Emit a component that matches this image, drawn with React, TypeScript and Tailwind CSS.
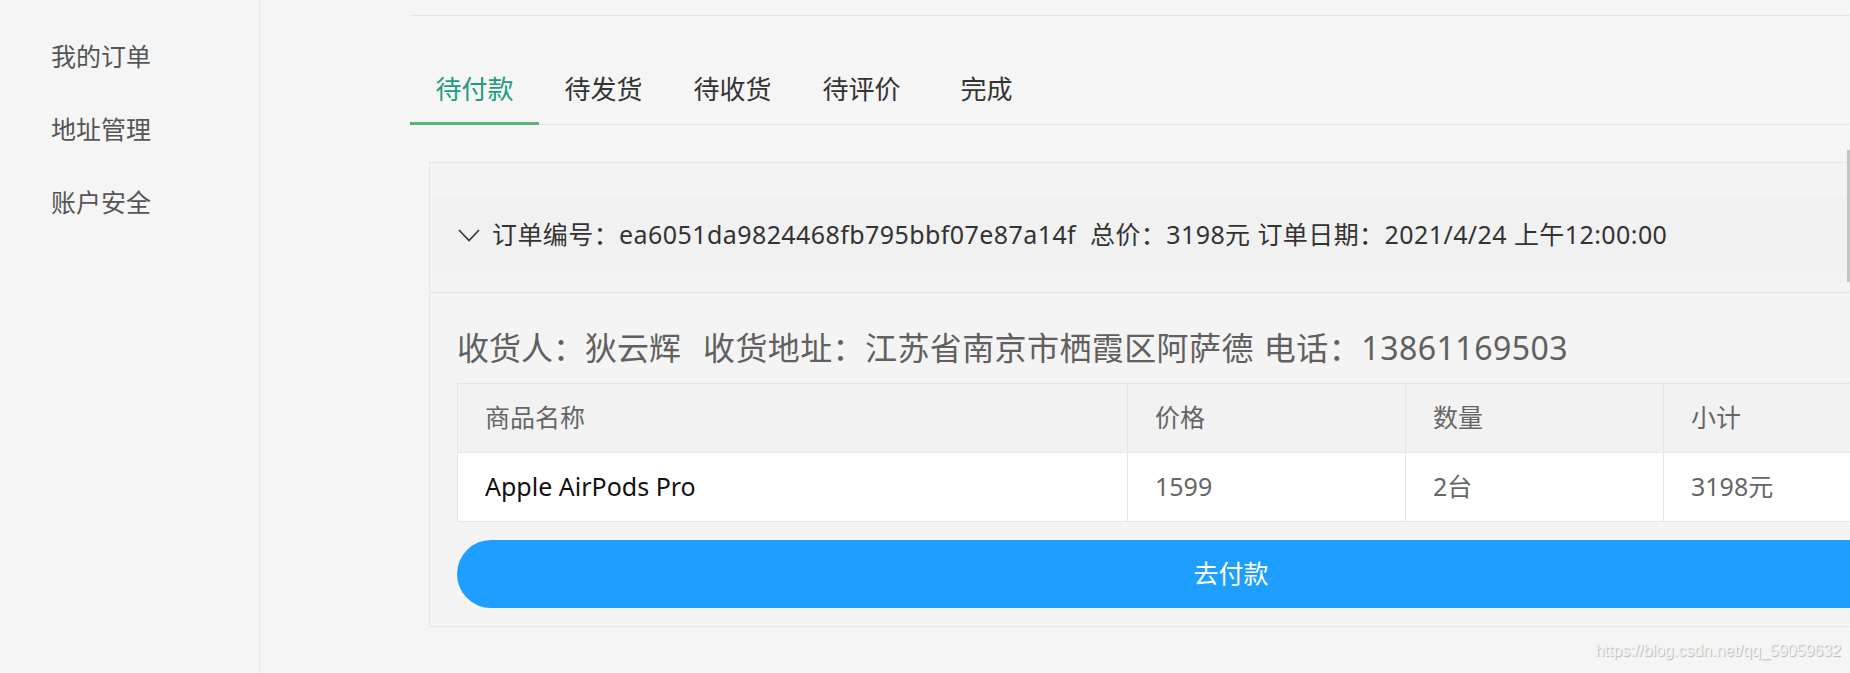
import React from "react";

const tabs = ["待付款", "待发货", "待收货", "待评价", "完成"];

const menu = ["我的订单", "地址管理", "账户安全"];

const App = () => {
  return (
    <div className="relative flex h-[673px] w-[1850px] overflow-hidden bg-[#f5f5f5] font-['Noto_Sans','Noto_Sans_CJK_SC',sans-serif]">
      {/* Sidebar */}
      <div className="w-[260px] shrink-0 border-r border-[#ebebeb] pt-[20px] pl-[51px]">
        {menu.map((item) => (
          <div
            key={item}
            className="h-[73px] flex items-center text-[25px] text-[#555]"
          >
            {item}
          </div>
        ))}
      </div>

      {/* Main */}
      <div className="flex-1 min-w-0 overflow-hidden pl-[150px]">
        <div className="w-[1700px] shrink-0">
          <div className="h-[16px] border-b border-[#e6e6e6]"></div>

          {/* Tabs */}
          <div className="mt-[38px] flex h-[71px] border-b border-[#e2e2e2]">
            {tabs.map((tab, i) => (
              <div
                key={tab}
                className={
                  i === 0
                    ? "-mb-px flex h-[71px] w-[129px] items-center justify-center border-b-[3px] border-[#5cb377] text-[26px] text-[#1f9b7f]"
                    : i === 4
                    ? "-mb-px flex h-[71px] w-[121px] items-center justify-center border-b-[3px] border-transparent text-[26px] text-[#333]"
                    : "-mb-px flex h-[71px] w-[129px] items-center justify-center border-b-[3px] border-transparent text-[26px] text-[#333]"
                }
              >
                <span className="pt-[3px]">{tab}</span>
              </div>
            ))}
          </div>

          {/* Order card */}
          <div className="mt-[37px] ml-[19px] w-[1604px] border border-[#e6e6e6] bg-[#f4f4f4]">
            <div className="pt-[34px] px-[2px]">
              <div className="flex h-[76px] items-center bg-[#f1f1f1] pl-[26px] text-[25px] text-[#333] whitespace-pre">
                <svg
                  width="22"
                  height="13"
                  viewBox="0 0 22 13"
                  fill="none"
                  stroke="#333"
                  strokeWidth="1.6"
                  className="mr-[12px]"
                >
                  <polyline points="1,1 11,11.5 21,1" />
                </svg>
                <span className="tracking-[0.42px]">
                  订单编号：ea6051da9824468fb795bbf07e87a14f  总价：3198元 订单日期：2021/4/24 上午12:00:00
                </span>
              </div>
            </div>

            <div className="mt-[19px] border-t border-[#e3e3e3] px-[27px] pt-[35px] pb-[18px]">
              <div className="flex h-[40px] text-[32px] leading-[40px] text-[#606060] whitespace-pre">
                <span>收货人：狄云辉</span>
                <span className="ml-[22px] tracking-[0.4px]">收货地址：江苏省南京市栖霞区阿萨德</span>
                <span className="ml-[10px] tracking-[0.5px]">电话：13861169503</span>
              </div>

              {/* Goods table */}
              <div className="mt-[15px] w-[1548px] border border-[#e6e6e6] text-[25px]">
                <div className="flex h-[68px] bg-[#f2f2f2] text-[#666]">
                  <div className="flex w-[670px] items-center border-r border-[#e6e6e6] pl-[27px]">商品名称</div>
                  <div className="flex w-[278px] items-center border-r border-[#e6e6e6] pl-[27px]">价格</div>
                  <div className="flex w-[258px] items-center border-r border-[#e6e6e6] pl-[27px]">数量</div>
                  <div className="flex flex-1 items-center pl-[27px]">小计</div>
                </div>
                <div className="flex h-[69px] border-t border-[#e6e6e6] bg-white text-[#666]">
                  <div className="flex w-[670px] items-center border-r border-[#e6e6e6] pl-[27px] text-[#111]">Apple AirPods Pro</div>
                  <div className="flex w-[278px] items-center border-r border-[#e6e6e6] pl-[27px]">1599</div>
                  <div className="flex w-[258px] items-center border-r border-[#e6e6e6] pl-[27px]">2台</div>
                  <div className="flex flex-1 items-center pl-[27px]">3198元</div>
                </div>
              </div>

              <button className="mt-[18px] flex h-[68px] w-[1548px] items-center justify-center rounded-full bg-[#1e9fff] text-[25px] text-white">
                去付款
              </button>
            </div>
          </div>
        </div>
      </div>

      {/* scrollbar sliver */}
      <div className="absolute right-0 top-[150px] h-[132px] w-[3px] bg-[#c4c4c4]"></div>

      {/* watermark */}
      <div className="absolute right-[9px] bottom-[10px] text-[16px] text-[#f4f4f4] font-['Liberation_Sans',sans-serif] [text-shadow:1px_1px_1px_#b5b5b5]">
        https://blog.csdn.net/qq_59059632
      </div>
    </div>
  );
};

export default App;
